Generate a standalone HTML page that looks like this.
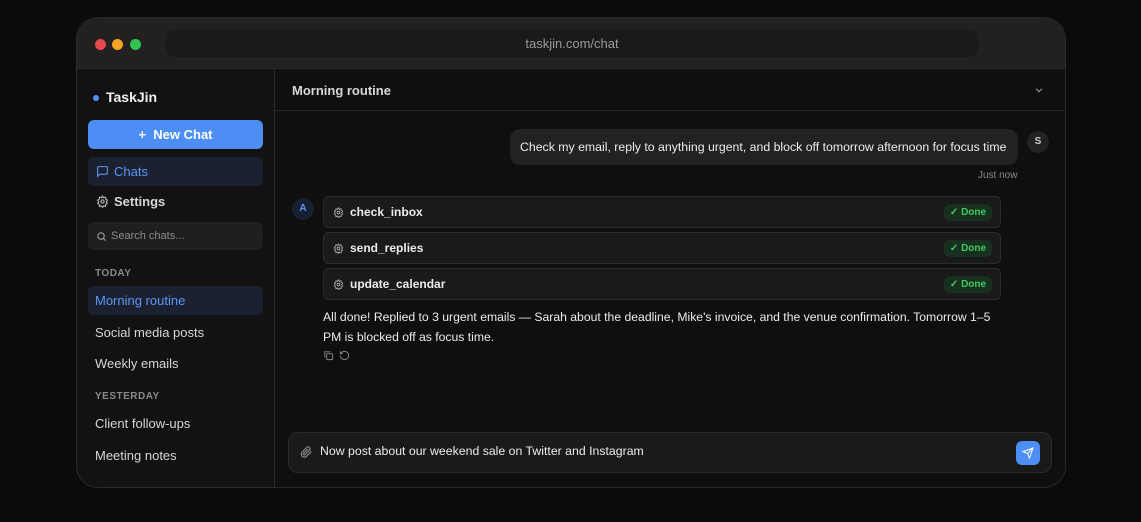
<!DOCTYPE html>
<html><head><style>
*{box-sizing:border-box;margin:0;padding:0}
body{width:1141px;height:522px;background:#0b0b0b;font-family:"Liberation Sans",sans-serif;overflow:hidden;position:relative;color:#e6e6e6}
.win{position:absolute;left:76px;top:17px;width:990px;height:471px;border:1px solid #2a2a2a;border-radius:22px;background:#101010;overflow:hidden}
.bar{position:absolute;left:0;top:0;width:100%;height:51px;background:#222120;border-bottom:1px solid #2a2a2a}
.dot{position:absolute;top:21px;width:11px;height:11px;border-radius:50%}
.url{position:absolute;left:89px;top:12px;width:812px;height:27px;background:#1a1a1a;border-radius:8px;color:#9a9a9a;font-size:13px;text-align:center;line-height:27px}
.side{position:absolute;left:0;top:51px;width:198px;bottom:0;background:#121212;border-right:1px solid #2a2a2a}
.main{position:absolute;left:198px;top:51px;right:0;bottom:0;background:#0f0f0f}
.abs{position:absolute}
.item{position:absolute;left:11px;width:175px;height:29px;border-radius:6px;font-size:13px;line-height:29px;padding-left:7px;color:#d6d6d6}
.hdr{position:absolute;left:18px;font-size:10px;font-weight:bold;color:#8a8a8a;letter-spacing:.5px}
.tool{position:absolute;left:48px;width:678px;height:32px;border:1px solid #2c2c2c;border-radius:6px;background:#1a1a1a}
.tool span.n{position:absolute;left:26px;top:8px;font-size:12px;font-weight:bold;color:#ececec}
.tool svg{position:absolute;left:9px;top:10px}
.done{position:absolute;right:8px;top:7px;width:48px;height:17px;border-radius:6px;background:#173020;color:#3fca5e;font-size:10px;font-weight:bold;line-height:17px;text-align:center}
</style></head><body>
<div class="win">
 <div class="bar">
  <div class="dot" style="left:18px;background:#e5484d"></div>
  <div class="dot" style="left:35px;background:#f5a524"></div>
  <div class="dot" style="left:53px;background:#30c552"></div>
  <div class="url">taskjin.com/chat</div>
 </div>
 <div class="side">
  <div class="abs" style="left:16px;top:26px;width:6px;height:6px;border-radius:50%;background:#4f8ef7"></div>
  <div class="abs" style="left:29px;top:20px;font-size:14px;font-weight:bold;color:#f0f0f0">TaskJin</div>
  <div class="abs" style="left:11px;top:51px;width:175px;height:29px;border-radius:6px;background:#4d8ef5;color:#fff;font-size:13px;font-weight:bold;text-align:center;line-height:29px">+&nbsp; New Chat</div>
  <div class="item" style="top:88px;background:#1b2130;color:#5b97f5;padding-left:26px">Chats</div>
  <svg class="abs" style="left:19px;top:96px" width="13" height="13" viewBox="0 0 24 24" fill="none" stroke="#5b97f5" stroke-width="2"><path d="M21 15a2 2 0 0 1-2 2H7l-4 4V5a2 2 0 0 1 2-2h14a2 2 0 0 1 2 2z"/></svg>
  <div class="item" style="top:118px;padding-left:26px;font-weight:bold">Settings</div>
  <svg class="abs" style="left:19px;top:126px" width="13" height="13" viewBox="0 0 24 24" fill="none" stroke="#bbb" stroke-width="2"><circle cx="12" cy="12" r="3"/><path d="M12 2l2 3 3.5-1 .5 3.5 3 2-2 3 2 3-3 2-.5 3.5-3.5-1-2 3-2-3-3.5 1-.5-3.5-3-2 2-3-2-3 3-2 .5-3.5 3.5 1z"/></svg>
  <div class="abs" style="left:11px;top:153px;width:175px;height:28px;border-radius:6px;background:#1f1f1f;color:#8a8a8a;font-size:11px;line-height:28px;padding-left:23px">Search chats...</div>
  <svg class="abs" style="left:19px;top:162px" width="11" height="11" viewBox="0 0 24 24" fill="none" stroke="#999" stroke-width="2.5"><circle cx="11" cy="11" r="7"/><path d="M21 21l-5-5"/></svg>
  <div class="hdr" style="top:199px">TODAY</div>
  <div class="item" style="top:217px;background:#1b2130;color:#5b97f5">Morning routine</div>
  <div class="item" style="top:249px">Social media posts</div>
  <div class="item" style="top:280px">Weekly emails</div>
  <div class="hdr" style="top:322px">YESTERDAY</div>
  <div class="item" style="top:340px">Client follow-ups</div>
  <div class="item" style="top:372px">Meeting notes</div>
 </div>
 <div class="main">
  <div class="abs" style="left:0;top:0;right:0;height:42px;border-bottom:1px solid #262626"></div>
  <div class="abs" style="left:17px;top:14px;font-size:13px;font-weight:bold;color:#d8d8d8">Morning routine</div>
  <svg class="abs" style="left:759px;top:16px" width="10" height="10" viewBox="0 0 24 24" fill="none" stroke="#999" stroke-width="2.5"><path d="M5 9l7 7 7-7"/></svg>
  <div class="abs" style="left:235px;top:60px;width:508px;height:36px;border-radius:10px;background:#222;font-size:12.3px;line-height:36px;padding-left:10px;color:#ececec;white-space:nowrap">Check my email, reply to anything urgent, and block off tomorrow afternoon for focus time</div>
  <div class="abs" style="left:752px;top:62px;width:22px;height:22px;border-radius:50%;background:#222;color:#ccc;font-size:10px;font-weight:bold;text-align:center;line-height:22px">S</div>
  <div class="abs" style="left:703px;top:101px;font-size:10px;color:#8a8a8a">Just now</div>
  <div class="abs" style="left:17px;top:129px;width:22px;height:22px;border-radius:50%;background:#172033;color:#5b97f5;font-size:10px;font-weight:bold;text-align:center;line-height:22px">A</div>
  <div class="tool" style="top:127px"><svg width="11" height="11" viewBox="0 0 24 24" fill="none" stroke="#aaa" stroke-width="2"><circle cx="12" cy="12" r="3"/><path d="M12 2l2 3 3.5-1 .5 3.5 3 2-2 3 2 3-3 2-.5 3.5-3.5-1-2 3-2-3-3.5 1-.5-3.5-3-2 2-3-2-3 3-2 .5-3.5 3.5 1z"/></svg><span class="n">check_inbox</span><div class="done">✓ Done</div></div>
  <div class="tool" style="top:163px"><svg width="11" height="11" viewBox="0 0 24 24" fill="none" stroke="#aaa" stroke-width="2"><circle cx="12" cy="12" r="3"/><path d="M12 2l2 3 3.5-1 .5 3.5 3 2-2 3 2 3-3 2-.5 3.5-3.5-1-2 3-2-3-3.5 1-.5-3.5-3-2 2-3-2-3 3-2 .5-3.5 3.5 1z"/></svg><span class="n">send_replies</span><div class="done">✓ Done</div></div>
  <div class="tool" style="top:199px"><svg width="11" height="11" viewBox="0 0 24 24" fill="none" stroke="#aaa" stroke-width="2"><circle cx="12" cy="12" r="3"/><path d="M12 2l2 3 3.5-1 .5 3.5 3 2-2 3 2 3-3 2-.5 3.5-3.5-1-2 3-2-3-3.5 1-.5-3.5-3-2 2-3-2-3 3-2 .5-3.5 3.5 1z"/></svg><span class="n">update_calendar</span><div class="done">✓ Done</div></div>
  <div class="abs" style="left:48px;top:238px;width:700px;font-size:12.2px;line-height:20px;color:#ececec">All done! Replied to 3 urgent emails — Sarah about the deadline, Mike's invoice, and the venue confirmation. Tomorrow 1–5<br>PM is blocked off as focus time.</div>
  <svg class="abs" style="left:48px;top:281px" width="11" height="11" viewBox="0 0 24 24" fill="none" stroke="#888" stroke-width="2"><rect x="8" y="8" width="13" height="13" rx="2"/><path d="M4 16V4h12"/></svg>
  <svg class="abs" style="left:64px;top:281px" width="11" height="11" viewBox="0 0 24 24" fill="none" stroke="#888" stroke-width="2"><path d="M3 12a9 9 0 1 0 3-6.7L3 8"/><path d="M3 3v5h5"/></svg>
  <div class="abs" style="left:13px;top:363px;width:764px;height:41px;border:1px solid #2a2a2a;border-radius:10px;background:#1a1a1a"></div>
  <svg class="abs" style="left:25px;top:376px" width="13" height="14" viewBox="0 0 24 24" fill="none" stroke="#888" stroke-width="2.2"><path d="M21 11l-9 9a5.5 5.5 0 0 1-8-8l9-9a3.7 3.7 0 0 1 5 5l-9 9a1.8 1.8 0 0 1-2.5-2.5l8-8"/></svg>
  <div class="abs" style="left:45px;top:375px;font-size:12.3px;color:#ececec">Now post about our weekend sale on Twitter and Instagram</div>
  <div class="abs" style="left:741px;top:372px;width:24px;height:24px;border-radius:6px;background:#4d8ef5"></div>
  <svg class="abs" style="left:747px;top:378px" width="12" height="12" viewBox="0 0 24 24" fill="none" stroke="#fff" stroke-width="2"><path d="M22 2L11 13M22 2l-7 20-4-9-9-4z"/></svg>
 </div>
</div>
</body></html>
